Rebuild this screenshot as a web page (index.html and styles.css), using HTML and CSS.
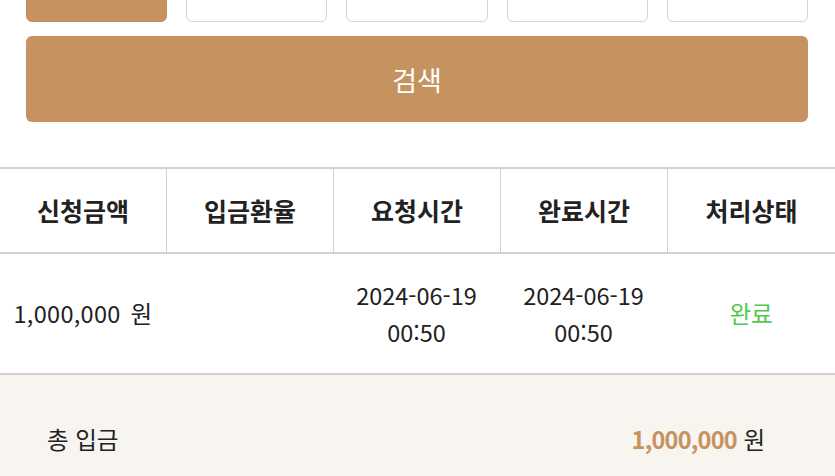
FILE: index.html
```html
<!DOCTYPE html>
<html lang="ko">
<head>
<meta charset="utf-8">
<link rel="stylesheet" href="styles.css">
</head>
<body>
<div class="page">
  <div class="filters">
    <div class="chip active"></div>
    <div class="chip"></div>
    <div class="chip"></div>
    <div class="chip"></div>
    <div class="chip"></div>
  </div>
  <div class="search">검색</div>
  <div class="table">
    <div class="row head">
      <div class="cell">신청금액</div>
      <div class="cell">입금환율</div>
      <div class="cell">요청시간</div>
      <div class="cell">완료시간</div>
      <div class="cell">처리상태</div>
    </div>
    <div class="row body">
      <div class="cell amount">1,000,000 원</div>
      <div class="cell"></div>
      <div class="cell">2024-06-19<br>00:50</div>
      <div class="cell">2024-06-19<br>00:50</div>
      <div class="cell status">완료</div>
    </div>
  </div>
  <div class="total">
    <span class="label">총 입금</span>
    <span class="sum"><span class="num">1,000,000</span> 원</span>
  </div>
</div>
</body>
</html>
```

FILE: styles.css
```css
html, body {
  margin: 0;
  padding: 0;
  background: #ffffff;
  overflow: hidden;
}
body {
  font-family: "Noto Sans CJK KR", "Noto Sans", sans-serif;
  color: #222222;
  width: 835px;
  height: 476px;
}
.page {
  display: flex;
  flex-direction: column;
}
.filters {
  display: grid;
  grid-template-columns: repeat(5, 1fr);
  gap: 19px;
  padding: 0 27px 0 26px;
  margin-top: -26px;
}
.chip {
  height: 48px;
  border: 1px solid #d4d4d4;
  border-radius: 6px;
  background: #ffffff;
  box-sizing: border-box;
}
.chip.active {
  background: #c6925f;
  border-color: #c08b59;
}
.search {
  margin: 14px 27px 0 26px;
  height: 86px;
  border-radius: 6px;
  background: #c6925f;
  color: #ffffff;
  font-size: 27px;
  display: flex;
  align-items: center;
  justify-content: center;
}
.table {
  margin-top: 45px;
  border-top: 2px solid #d2d2d2;
}
.row {
  display: grid;
  grid-template-columns: 166px 167px 167px 167px 168px;
  border-bottom: 2px solid #d2d2d2;
}
.row.head {
  height: 83px;
}
.row.head .cell {
  font-weight: 700;
  font-size: 25px;
  color: #222;
}
.row.head .cell + .cell {
  border-left: 1px solid #d2d2d2;
}
.row.body {
  height: 119px;
}
.cell {
  display: flex;
  align-items: center;
  justify-content: center;
  text-align: center;
  font-size: 23.5px;
  line-height: 37px;
  color: #222;
}
.cell.amount {
  word-spacing: 3px;
  letter-spacing: 0.3px;
}
.status {
  color: #52c84e;
}
.total {
  background: #f8f4f0;
  height: 110px;
  display: flex;
  align-items: center;
  justify-content: space-between;
  padding: 18px 70px 0 47px;
  box-sizing: border-box;
  font-size: 23.5px;
}
.sum .num {
  color: #c6925f;
  font-weight: 700;
  letter-spacing: -0.8px;
}
```
